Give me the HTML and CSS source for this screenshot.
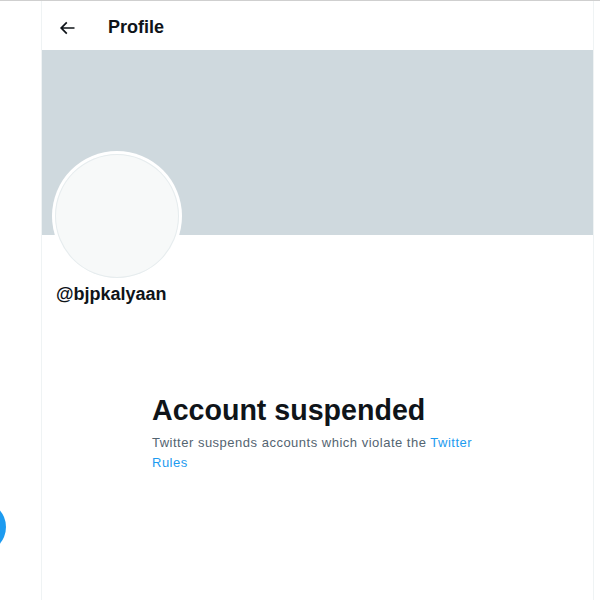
FILE: index.html
```html
<!DOCTYPE html>
<html>
<head>
<meta charset="utf-8">
<link rel="stylesheet" href="styles.css">
</head>
<body>
<div class="app">
  <nav class="side">
    <div class="fab"></div>
  </nav>
  <main class="main">
    <header class="topbar">
      <svg class="back" viewBox="0 0 24 24" width="20" height="20"><path d="M7.414 13l5.043 5.04-1.414 1.42L3.586 12l7.457-7.46 1.414 1.42L7.414 11H21v2H7.414z"/></svg>
      <span class="title">Profile</span>
    </header>
    <div class="banner"></div>
    <section class="head">
      <div class="avatar"><div class="avatar-in"></div></div>
      <div class="handle">@bjpkalyaan</div>
    </section>
    <section class="notice">
      <h1 class="ntitle">Account suspended</h1>
      <p class="ntext">Twitter suspends accounts which violate the <span class="link">Twitter Rules</span></p>
    </section>
  </main>
  <div class="rest"></div>
</div>
</body>
</html>
```
FILE: styles.css
```css
html, body {
  margin: 0;
  padding: 0;
  background: #fff;
  font-family: "Liberation Sans", Arial, sans-serif;
  color: #0f1419;
}
.app {
  display: flex;
  height: 600px;
  border-top: 1px solid #cfcfcf;
  box-sizing: border-box;
  overflow: hidden;
}
.side {
  width: 41px;
  flex: none;
  position: relative;
}
.fab {
  position: absolute;
  left: -46px;
  top: 500px;
  width: 52px;
  height: 52px;
  border-radius: 50%;
  background: #1d9bf0;
}
.main {
  width: 551px;
  flex: none;
  border-left: 1px solid #eff3f4;
  border-right: 1px solid #eff3f4;
}
.rest { flex: 1; }
.topbar {
  height: 49px;
  display: flex;
  align-items: center;
  padding: 4px 0 0 15px;
  box-sizing: border-box;
}
.back {
  fill: #0f1419;
  margin-right: 31px;
}
.title {
  font-size: 18px;
  font-weight: 700;
}
.banner {
  height: 185px;
  background: #cfd9de;
}
.head {
  padding-left: 14px;
}
.avatar {
  width: 130px;
  height: 130px;
  margin-top: -84px;
  margin-left: -4px;
  border-radius: 50%;
  background: #fff;
  padding: 3px;
  box-sizing: border-box;
}
.avatar-in {
  width: 100%;
  height: 100%;
  border-radius: 50%;
  background: #f7f9f9;
  box-shadow: inset 0 0 0 1px #e6ecee;
}
.handle {
  font-size: 18px;
  font-weight: 700;
  line-height: 24px;
  margin-top: 1px;
}
.notice {
  padding: 86px 0 0 110px;
  width: 440px;
}
.ntitle {
  margin: 0;
  font-size: 28.6px;
  font-weight: 700;
  line-height: 36px;
}
.ntext {
  margin: 5px 0 0;
  font-size: 13px;
  letter-spacing: 0.5px;
  line-height: 20px;
  color: #536471;
  width: 340px;
}
.link { color: #1d9bf0; }
```
